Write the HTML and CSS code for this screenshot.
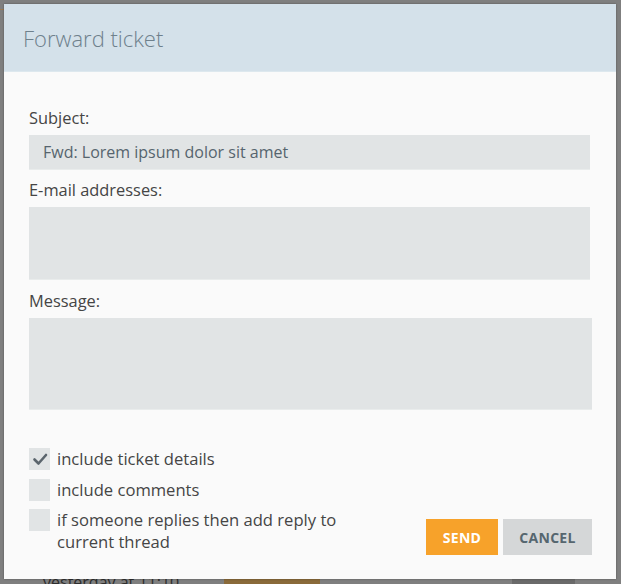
FILE: index.html
```html
<!DOCTYPE html>
<html lang="en">
<head>
<meta charset="utf-8">
<title>Forward ticket</title>
<link rel="stylesheet" href="styles.css">
</head>
<body>
<div class="backdrop">
  <div class="bd-line bd-line-top"></div>
  <div class="bd-foot">
    <span class="bd-time">yesterday at 11:10</span>
    <span class="bd-bar bd-orange"></span>
    <span class="bd-bar bd-grey"></span>
  </div>
</div>
<div class="dialog">
  <div class="dialog-head">
    <h1 class="dialog-title">Forward ticket</h1>
  </div>
  <div class="dialog-body">
    <label class="field-label">Subject:</label>
    <div class="input input-subject">Fwd: Lorem ipsum dolor sit amet</div>
    <label class="field-label">E-mail addresses:</label>
    <div class="input input-emails"></div>
    <label class="field-label">Message:</label>
    <div class="input input-message"></div>
    <div class="footer">
      <div class="options">
        <div class="option">
          <span class="box">
            <svg class="tick" viewBox="0 0 16 16" width="16" height="16"><polyline points="2.5,8.5 6.5,12.5 14,4" fill="none" stroke="#5b656d" stroke-width="2.6" stroke-linecap="round" stroke-linejoin="round"/></svg>
          </span>
          <span class="option-text">include ticket details</span>
        </div>
        <div class="option">
          <span class="box"></span>
          <span class="option-text">include comments</span>
        </div>
        <div class="option">
          <span class="box"></span>
          <span class="option-text">if someone replies then add reply to current thread</span>
        </div>
      </div>
      <div class="actions">
        <button class="btn btn-send">SEND</button>
        <button class="btn btn-cancel">CANCEL</button>
      </div>
    </div>
  </div>
</div>
</body>
</html>
```

FILE: styles.css
```css
* { box-sizing: border-box; }
html, body { margin: 0; padding: 0; }
body {
  width: 621px;
  height: 584px;
  overflow: hidden;
  background: #7f7f7f;
  font-family: "Open Sans", "Liberation Sans", sans-serif;
  position: relative;
  padding: 4px 0 0 4px;
}
.backdrop {
  position: absolute;
  inset: 0;
}
.bd-line-top {
  position: absolute;
  left: 0; top: 9px;
  width: 4px; height: 1px;
  background: #9a7a55;
}
.bd-foot {
  position: absolute;
  left: 0; top: 572px;
  width: 621px;
  height: 12px;
}
.bd-time {
  position: absolute;
  left: 43px; top: -1px;
  font-size: 16px;
  line-height: 22px;
  color: #2d2d2d;
}
.bd-bar { position: absolute; top: 7px; height: 6px; }
.bd-orange { left: 224px; width: 96px; background: #8a6a3a; }
.bd-grey { left: 512px; width: 63px; background: #6a6a6a; }

.dialog {
  position: relative;
  width: 612px;
  height: 575px;
  background: #fafafa;
  box-shadow: 0 0 2px rgba(0,0,0,0.35);
}
.dialog-head {
  height: 68px;
  background: #d4e1ea;
  border-bottom: 1px solid #dde8ee;
  padding: 0 0 0 19px;
  display: flex;
  align-items: center;
}
.dialog-title {
  margin: 0;
  font-weight: 300;
  font-size: 22px;
  color: #6e808c;
}
.dialog-body {
  padding: 35px 26px 0 25px;
}
.field-label {
  display: block;
  font-size: 16.4px;
  line-height: 22px;
  color: #454545;
  margin-bottom: 6px;
}
.input {
  background: #e1e4e5;
  width: 561px;
  border-bottom: 1px solid #e9ecec;
}
.input-subject {
  height: 35px;
  padding: 0 14px;
  font-size: 16px;
  line-height: 34px;
  color: #56646e;
  margin-bottom: 9px;
}
.input-emails { height: 73px; margin-bottom: 10px; }
.input-message { height: 92px; width: 563px; }
.footer {
  margin-top: 38px;
  display: flex;
  justify-content: space-between;
  align-items: flex-end;
  width: 563px;
}
.options {
  width: 320px;
  display: flex;
  flex-direction: column;
  gap: 8.5px;
}
.option {
  display: flex;
  align-items: flex-start;
  gap: 7px;
}
.box {
  flex: none;
  width: 21px;
  height: 22px;
  background: #e1e4e5;
  display: flex;
  align-items: center;
  justify-content: center;
}
.option-text {
  font-size: 16.6px;
  line-height: 22px;
  color: #454545;
}
.actions {
  display: flex;
  gap: 5px;
  margin-bottom: -2px;
}
.btn {
  border: 0;
  height: 36px;
  font-family: "Open Sans", "Liberation Sans", sans-serif;
  font-weight: 700;
  font-size: 14px;
  letter-spacing: 0.3px;
  padding: 0;
  cursor: pointer;
}
.btn-send {
  width: 72px;
  background: #f7a22a;
  color: #ffffff;
}
.btn-cancel {
  width: 89px;
  background: #d5d7d8;
  color: #56666f;
}
```
